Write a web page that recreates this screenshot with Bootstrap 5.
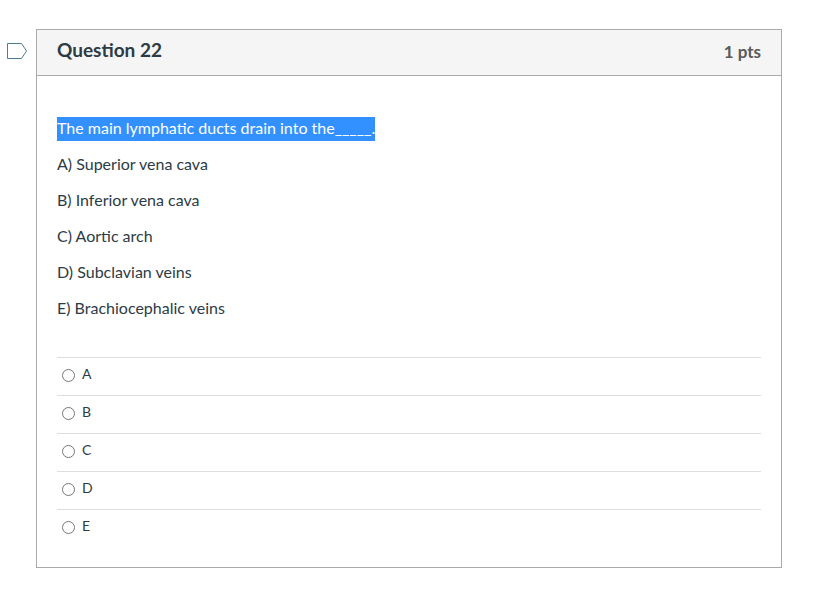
<!DOCTYPE html>
<html lang="en">
<head>
<meta charset="utf-8">
<meta name="viewport" content="width=device-width, initial-scale=1">
<title>Question 22</title>
<link href="https://cdn.jsdelivr.net/npm/bootstrap@5.3.0/dist/css/bootstrap.min.css" rel="stylesheet">
<style>
body { font-family: Lato, "Liberation Sans", sans-serif; font-size: 16px; line-height: 22px; color: #2d3b45; background: #fff; }
.quiz { padding: 29px 31px 32px 7px; }
.flag-btn { width: 21px; height: 18px; margin: 13px 8px 0 0; }
.question { border: 1px solid #aaa; }
.question-head { background: #f5f5f5; border-bottom: 1px solid #aaa; padding: 8px 20px 13px; }
.question-head h1 { font-size: 19px; line-height: 24px; font-weight: 700; }
.points { font-size: 17px; line-height: 24px; font-weight: 700; color: #595959; padding-top: 2px; margin-bottom: -2px; }
.question-body { padding: 41px 20px 20px; }
.question-text p { margin-bottom: 12px; padding-bottom: 2px; }
.question-text .picked-line { padding-bottom: 0; }
.picked { background: #3390ff; color: #fff; display: block; width: fit-content; padding-bottom: 2px; }
.answers { margin-top: 36px; }
.answer { border-top: 1px solid #ddd; padding: 8px 5px; height: 38px; font-size: 14px; line-height: 16px; }
.answer input { appearance: none; width: 13px; height: 13px; border: 1px solid #767676; border-radius: 50%; margin: 3px 7px 0 0; background: #fff; }
.answer input:checked { border: 4px solid #0075ff; }
</style>
<script src="https://cdn.jsdelivr.net/npm/bootstrap@5.3.0/dist/js/bootstrap.bundle.min.js"></script>
</head>
<body>
<main class="quiz d-flex align-items-start">
  <button type="button" class="flag-btn btn p-0 border-0 rounded-0 d-flex flex-shrink-0" aria-label="Flag question">
    <svg width="21" height="18" viewBox="0 0 21 18" fill="none" stroke="#4a7d96"><path d="M.5 1.5H14.500L19.500 9l-5 7.500H.5z"/></svg>
  </button>
  <section class="question flex-grow-1">
    <header class="question-head d-flex justify-content-between">
      <h1 class="m-0">Question 22</h1>
      <span class="points">1 pts</span>
    </header>
    <div class="question-body">
      <div class="question-text">
        <p class="picked-line"><span class="picked">The main lymphatic ducts drain into the_____.</span></p>
        <p>A) Superior vena cava</p>
        <p>B) Inferior vena cava</p>
        <p>C) Aortic arch</p>
        <p>D) Subclavian veins</p>
        <p>E) Brachiocephalic veins</p>
      </div>
      <div class="answers" role="radiogroup" aria-label="Answers">
        <div class="answer d-flex align-items-start"><input type="radio" name="answer" id="a"><label for="a">A</label></div>
        <div class="answer d-flex align-items-start"><input type="radio" name="answer" id="b"><label for="b">B</label></div>
        <div class="answer d-flex align-items-start"><input type="radio" name="answer" id="c"><label for="c">C</label></div>
        <div class="answer d-flex align-items-start"><input type="radio" name="answer" id="d"><label for="d">D</label></div>
        <div class="answer d-flex align-items-start"><input type="radio" name="answer" id="e"><label for="e">E</label></div>
      </div>
    </div>
  </section>
</main>
</body>
</html>
